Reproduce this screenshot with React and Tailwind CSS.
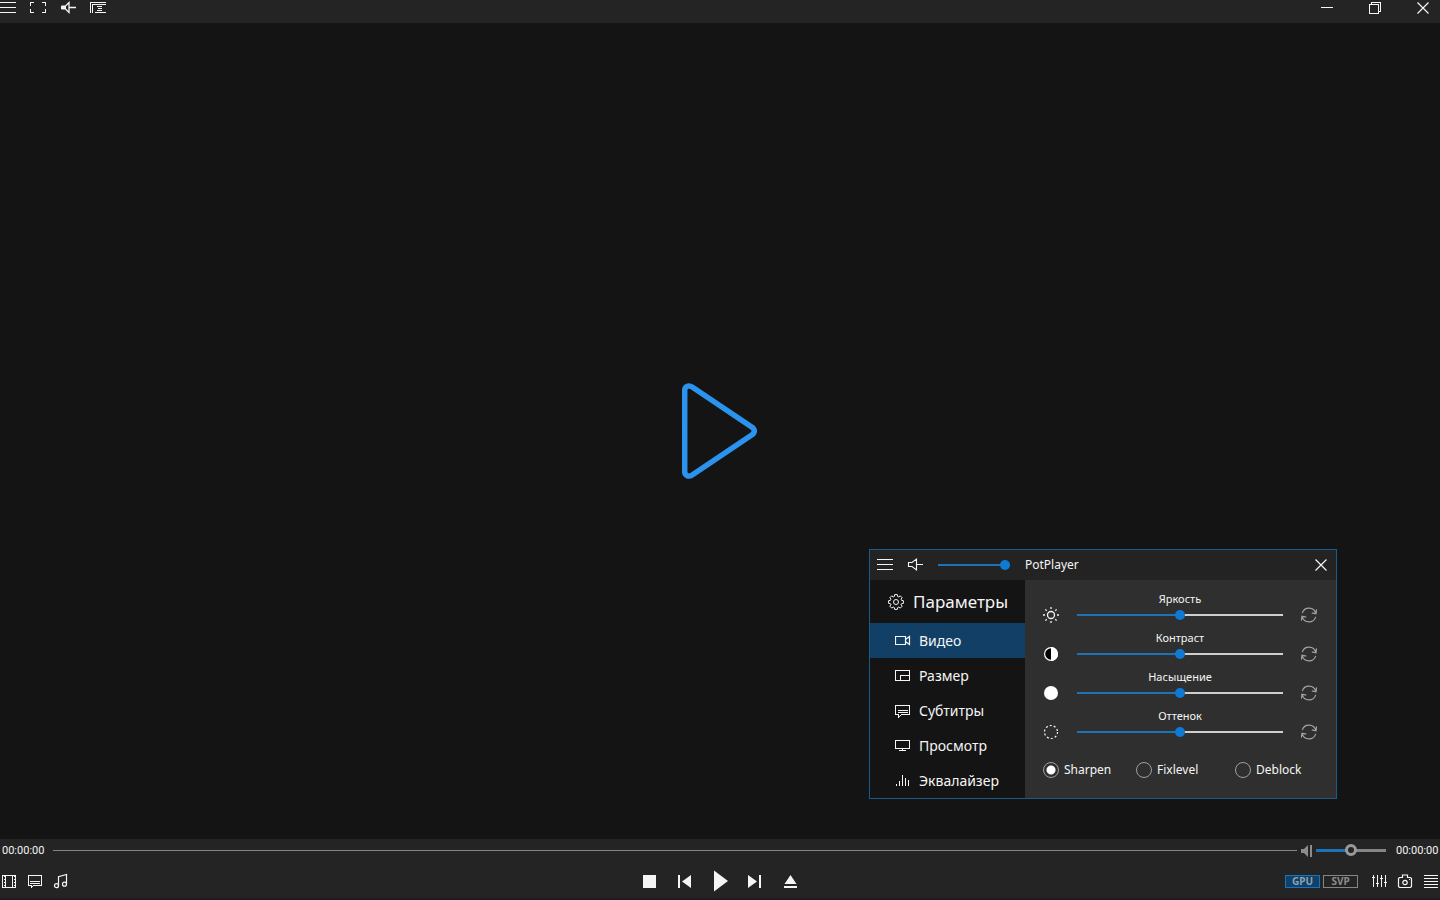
import React, { useState } from 'react';

const range =
  'appearance-none bg-transparent cursor-pointer block min-w-0 h-4 [&::-webkit-slider-runnable-track]:h-0.5 [&::-webkit-slider-runnable-track]:bg-[image:var(--track)] [&::-webkit-slider-thumb]:appearance-none [&::-webkit-slider-thumb]:size-2.5 [&::-webkit-slider-thumb]:-mt-1 [&::-webkit-slider-thumb]:rounded-full [&::-webkit-slider-thumb]:bg-[#0f7ad4]';

const volumeRange =
  'appearance-none bg-transparent cursor-pointer block h-4 w-[70px] [&::-webkit-slider-runnable-track]:h-[3px] [&::-webkit-slider-runnable-track]:bg-[image:var(--track)] [&::-webkit-slider-thumb]:appearance-none [&::-webkit-slider-thumb]:size-3 [&::-webkit-slider-thumb]:-mt-[5px] [&::-webkit-slider-thumb]:rounded-full [&::-webkit-slider-thumb]:border-[3px] [&::-webkit-slider-thumb]:border-[#9a9a9a] [&::-webkit-slider-thumb]:bg-[#242424]';

const trackStyle = (value, rest) => ({
  '--track': `linear-gradient(to right, #1c73b8 ${value}%, ${rest} ${value}%)`,
});

// All line icons share a 16px box
const Icon = ({ children, crisp = false }) => (
  <svg
    viewBox="0 0 16 16"
    className="block size-4 shrink-0"
    fill="none"
    stroke="currentColor"
    strokeWidth="1"
    shapeRendering={crisp ? 'crispEdges' : 'auto'}
    aria-hidden="true"
  >
    {children}
  </svg>
);

const MenuIcon = () => (
  <Icon crisp><path d="M0 2.5h16M0 7.5h16M0 12.5h16" /></Icon>
);

const FullscreenIcon = () => (
  <Icon crisp><path d="M4 2.5H.5V6M12 2.5h3.5V6M.5 9v3.5H4M15.5 9v3.5H12" /></Icon>
);

const MuteIcon = () => (
  <Icon>
    <path d="M1.5 5.5H5L9.5 2v11L5 9.5H1.5zM9.5 7.5H16" strokeWidth="1.1" />
  </Icon>
);

const MuteBoldIcon = () => (
  <Icon>
    <path d="M1.5 6h4v3h-4z" fill="currentColor" />
    <path d="M5.5 6L9 2.5v10L5.5 9M9 7.5h7" strokeWidth="1.3" />
  </Icon>
);

const PlaylistWindowIcon = () => (
  <Icon crisp>
    <path d="M.5 13V2.5H16M2.5 13V4.5H16M7 6.5h5M8 8.5h4M7 10.5h5M5 12.5h11" />
  </Icon>
);

const CloseIcon = () => (
  <Icon><path d="M2.5 2.5l11 11M13.5 2.5l-11 11" strokeWidth="1.2" /></Icon>
);

const GearIcon = () => (
  <Icon>
    <circle cx="8" cy="8" r="2.5" />
    <path d="M6.7.6h2.6l.4 1.9 1 .4 1.6-1 1.8 1.8-1 1.6.4 1 1.9.4v2.6l-1.9.4-.4 1 1 1.6-1.8 1.8-1.6-1-1 .4-.4 1.9H6.7l-.4-1.9-1-.4-1.6 1-1.8-1.8 1-1.6-.4-1L.6 9.3V6.7l1.9-.4.4-1-1-1.6 1.8-1.8 1.6 1 1-.4z" />
  </Icon>
);

const CameraIcon = () => (
  <Icon><path d="M.5 3.5h10v8H.5zM10.5 6.5L14.5 3.5v8l-4-3" strokeWidth="1.2" /></Icon>
);

const SizeIcon = () => (
  <Icon crisp><path d="M.5 2.5h14v10H.5zM5.5 12.5v-5h9" /></Icon>
);

const SubtitleIcon = () => (
  <Icon crisp>
    <path d="M.5 2.5h14v9H6.5L3.5 14.5V11.5H.5zM3 7.5h10M3 9.5h10" />
  </Icon>
);

const MonitorIcon = () => (
  <Icon crisp><path d="M.5 2.5h14v8H.5zM7.5 10.5v2M4 12.5h7" /></Icon>
);

const EqualizerIcon = () => (
  <Icon crisp><path d="M1.5 13v-2M4.5 13V8M7.5 13V2M10.5 13V5M13.5 13V7" /></Icon>
);

const BrightnessIcon = () => (
  <Icon>
    <circle cx="8" cy="8" r="3.5" strokeWidth="1.3" />
    <path d="M8 0v2M8 14v2M0 8h2M14 8h2M2.4 2.4l1.3 1.3M12.3 12.3l1.3 1.3M2.4 13.6l1.3-1.3M12.3 3.7l1.3-1.3" strokeWidth="1.3" />
  </Icon>
);

const ContrastIcon = () => (
  <Icon>
    <circle cx="8" cy="8" r="6.4" fill="#000" stroke="#fff" strokeWidth="1.2" />
    <path d="M8 1a7 7 0 0 1 0 14z" fill="#fff" stroke="none" />
  </Icon>
);

const SaturationIcon = () => (
  <Icon><circle cx="8" cy="8" r="7" fill="#fff" stroke="none" /></Icon>
);

const HueIcon = () => (
  <Icon><circle cx="8" cy="8" r="6.5" strokeWidth="1.2" strokeDasharray="2 2.08" /></Icon>
);

const ResetIcon = () => (
  <Icon>
    <path d="M1.3 6.2A7 7 0 0 1 14.8 6.4M14.7 9.8A7 7 0 0 1 1.2 9.6M15.6 2.4L15 6.8L10.8 5.8M.4 13.6L1 9.2L5.2 10.2" strokeWidth="1.2" />
  </Icon>
);

const FilmIcon = () => (
  <Icon crisp>
    <path d="M1.5 2.5h13v12h-13zM4.5 2.5v12M11.5 2.5v12" />
    <path d="M3 3v11M13 3v11" strokeDasharray="1 2" />
  </Icon>
);

const CommentIcon = () => (
  <Icon crisp>
    <path d="M1.5 2.5h13v10H6.5L4.5 14.5V12.5H1.5zM3 8.5h10M3 10.5h10" />
  </Icon>
);

const MusicIcon = () => (
  <Icon>
    <path d="M5.5 12.7V3.7l8-2.2v9.7" strokeWidth="1.2" />
    <circle cx="3.5" cy="12.7" r="2" strokeWidth="1.2" />
    <circle cx="11.5" cy="11.2" r="2" strokeWidth="1.2" />
  </Icon>
);

const MixerIcon = () => (
  <Icon crisp>
    <path d="M2.5 2v12M6.5 2v12M10.5 2v12M14.5 2v12M1 4.5h3M5 10.5h3M9 5.5h3M13 9.5h3" />
  </Icon>
);

const SnapshotIcon = () => (
  <Icon>
    <path d="M1.5 5.5l1-1h3v-2.5h5v2.5h3l1 1v8l-1 1h-11l-1-1z" strokeWidth="1.2" />
    <circle cx="8" cy="9.5" r="2.2" strokeWidth="1.2" />
    <path d="M12 6.5h1" />
  </Icon>
);

const ListIcon = () => (
  <Icon crisp><path d="M1 2.5h14M1 5.5h14M1 8.5h14M1 11.5h14M1 14.5h14" /></Icon>
);

const IconButton = ({ label, children, className = '' }) => (
  <button type="button" aria-label={label} className={`flex items-center justify-center ${className}`}>
    {children}
  </button>
);

const TopBar = () => (
  <header className="flex h-[23px] shrink-0 items-start justify-between bg-[#242424] pr-[9px]">
    <div className="flex gap-3.5">
      <IconButton label="Меню"><MenuIcon /></IconButton>
      <IconButton label="Во весь экран"><FullscreenIcon /></IconButton>
      <IconButton label="Звук"><MuteBoldIcon /></IconButton>
      <IconButton label="Плейлист"><PlaylistWindowIcon /></IconButton>
    </div>
    <div className="flex gap-8">
      <IconButton label="Свернуть">
        <Icon crisp><path d="M2 7.5h12" /></Icon>
      </IconButton>
      <IconButton label="Восстановить">
        <Icon crisp><path d="M2.5 4.5h9v9h-9zM4.5 4.5v-2h9v9h-2" /></Icon>
      </IconButton>
      <IconButton label="Закрыть"><CloseIcon /></IconButton>
    </div>
  </header>
);

const tabs = [
  { id: 'video', label: 'Видео', icon: CameraIcon },
  { id: 'size', label: 'Размер', icon: SizeIcon },
  { id: 'subtitles', label: 'Субтитры', icon: SubtitleIcon },
  { id: 'view', label: 'Просмотр', icon: MonitorIcon },
  { id: 'equalizer', label: 'Эквалайзер', icon: EqualizerIcon },
];

const sliders = [
  { id: 'brightness', label: 'Яркость', icon: BrightnessIcon },
  { id: 'contrast', label: 'Контраст', icon: ContrastIcon },
  { id: 'saturation', label: 'Насыщение', icon: SaturationIcon },
  { id: 'hue', label: 'Оттенок', icon: HueIcon },
];

const SliderRow = ({ id, label, icon: RowIcon }) => {
  const [value, setValue] = useState(50);

  return (
    <div className="flex items-end gap-[18px]">
      <RowIcon />
      <div className="flex min-w-0 flex-1 flex-col">
        <label htmlFor={id} className="text-center text-[11px] leading-4">{label}</label>
        <input
          id={id}
          type="range"
          value={value}
          onChange={(e) => setValue(Number(e.target.value))}
          className={`${range} w-full`}
          style={trackStyle(value, '#cfcfcf')}
        />
      </div>
      <button type="button" aria-label={`Сбросить: ${label}`} className="text-[#a3a3a3]" onClick={() => setValue(50)}>
        <ResetIcon />
      </button>
    </div>
  );
};

const SettingsPanel = () => {
  const [activeTab, setActiveTab] = useState('video');
  const [filter, setFilter] = useState('Sharpen');
  const [volume, setVolume] = useState(100);

  return (
    <section className="absolute right-[103px] bottom-10 w-[468px] border border-[#175a8e] bg-[#2f2f2f]">
      <div className="flex h-[30px] items-center bg-[#232323] px-[7px]">
        <IconButton label="Меню панели"><MenuIcon /></IconButton>
        <IconButton label="Звук панели" className="ml-3.5"><MuteIcon /></IconButton>
        <input
          type="range"
          aria-label="Громкость панели"
          value={volume}
          onChange={(e) => setVolume(Number(e.target.value))}
          className={`${range} ml-[15px] w-[72px]`}
          style={trackStyle(volume, '#cfcfcf')}
        />
        <h2 className="ml-[15px] flex-1 text-xs">PotPlayer</h2>
        <IconButton label="Закрыть панель"><CloseIcon /></IconButton>
      </div>
      <div className="flex">
        <nav className="w-[155px] shrink-0 bg-[#141414]">
          <h3 className="flex h-[43px] items-center gap-[9px] pl-[18px] text-[17px]">
            <GearIcon />
            Параметры
          </h3>
          {tabs.map(({ id, label, icon: TabIcon }) => (
            <button
              key={id}
              type="button"
              onClick={() => setActiveTab(id)}
              className={`flex h-[35px] w-full items-center gap-2 pl-[25px] text-sm ${activeTab === id ? 'bg-[#113f66]' : ''}`}
            >
              <TabIcon />
              {label}
            </button>
          ))}
        </nav>
        <div className="flex min-w-0 flex-1 flex-col pt-[11px] pr-[19px] pl-[18px]">
          <div className="flex flex-col gap-[7px]">
            {sliders.map((slider) => (
              <SliderRow key={slider.id} {...slider} />
            ))}
          </div>
          <div className="mt-[22px] grid grid-cols-[93px_99px_1fr]">
            {['Sharpen', 'Fixlevel', 'Deblock'].map((name) => (
              <label key={name} className="flex items-center gap-[5px] text-xs leading-4">
                <input
                  type="radio"
                  name="filter"
                  checked={filter === name}
                  onChange={() => setFilter(name)}
                  className="size-4 shrink-0 appearance-none rounded-full border border-[#a0a0a0] checked:bg-[radial-gradient(circle,#fff_4px,transparent_5px)]"
                />
                {name}
              </label>
            ))}
          </div>
        </div>
      </div>
    </section>
  );
};

const BottomBar = () => {
  const [position, setPosition] = useState(0);
  const [volume, setVolume] = useState(50);

  return (
    <footer className="shrink-0 border-b-2 border-[#211a20] bg-[#242424]">
      <div className="flex h-[23px] items-center px-0.5 text-[11px]">
        <span className="w-[42px] shrink-0 pt-0.5 font-['Roboto',sans-serif]">00:00:00</span>
        <input
          type="range"
          aria-label="Позиция"
          value={position}
          onChange={(e) => setPosition(Number(e.target.value))}
          className="ml-[9px] block h-[15px] min-w-0 flex-1 cursor-pointer appearance-none bg-transparent [&::-webkit-slider-runnable-track]:h-px [&::-webkit-slider-runnable-track]:bg-[#858585] [&::-webkit-slider-thumb]:size-px [&::-webkit-slider-thumb]:appearance-none"
        />
        <button type="button" aria-label="Громкость" className="ml-[3px] text-[#8c8c8c]">
          <Icon>
            <path d="M1 6h3l4-4v12l-4-4H1z" fill="currentColor" stroke="none" />
            <path d="M11 2v12" strokeWidth="2" />
          </Icon>
        </button>
        <input
          type="range"
          aria-label="Уровень громкости"
          value={volume}
          onChange={(e) => setVolume(Number(e.target.value))}
          className={volumeRange}
          style={trackStyle(volume, '#858585')}
        />
        <span className="ml-2.5 w-[42px] shrink-0 pt-0.5 font-['Roboto',sans-serif]">00:00:00</span>
      </div>
      <div className="grid h-9 grid-cols-[1fr_auto_1fr] items-center pt-0.5">
        <div className="flex gap-2.5 pl-px">
          <IconButton label="Видео"><FilmIcon /></IconButton>
          <IconButton label="Субтитры"><CommentIcon /></IconButton>
          <IconButton label="Аудио"><MusicIcon /></IconButton>
        </div>
        <div className="flex items-center gap-[19px] pr-px">
          <IconButton label="Стоп">
            <Icon><path d="M2 2h13v13H2z" fill="currentColor" stroke="none" /></Icon>
          </IconButton>
          <IconButton label="Назад">
            <Icon><path d="M2 2h2v13H2zM15 2v13L6 8.5z" fill="currentColor" stroke="none" /></Icon>
          </IconButton>
          <IconButton label="Играть">
            <svg viewBox="0 0 17 22" className="block h-[22px] w-[17px]" fill="currentColor" aria-hidden="true">
              <path d="M3 .5v21L17 11z" />
            </svg>
          </IconButton>
          <IconButton label="Вперёд">
            <Icon><path d="M12 2h2v13h-2zM1 2v13l9-6.5z" fill="currentColor" stroke="none" /></Icon>
          </IconButton>
          <IconButton label="Открыть">
            <Icon><path d="M8.5 2l6 9h-12zM2 13h13v2H2z" fill="currentColor" stroke="none" /></Icon>
          </IconButton>
        </div>
        <div className="flex items-center justify-end pr-px">
          <button type="button" className="h-[13px] w-[35px] border border-[#1c73b8] bg-[#10416a] text-[10px] leading-[11px] font-bold text-[#8fa0ae]">GPU</button>
          <button type="button" className="ml-[3px] h-[13px] w-[35px] border border-[#858585] text-[10px] leading-[11px] font-bold text-[#8c8c8c]">SVP</button>
          <IconButton label="Настройки" className="ml-[13px]"><MixerIcon /></IconButton>
          <IconButton label="Снимок" className="ml-2.5"><SnapshotIcon /></IconButton>
          <IconButton label="Список" className="ml-2.5"><ListIcon /></IconButton>
        </div>
      </div>
    </footer>
  );
};

const App = () => (
  <div className="flex h-screen flex-col overflow-hidden bg-[#141414] font-['Noto_Sans',sans-serif] text-[#f5f5f5]">
    <TopBar />
    <main className="relative flex min-h-0 flex-1 items-center justify-center">
      <button type="button" aria-label="Воспроизвести">
        <svg viewBox="0 0 76 96" className="block h-24 w-[76px]" fill="none" stroke="#2b93ee" strokeWidth="5.5" aria-hidden="true">
          <path d="M2.7 7.5v81c0 3.7 3.5 6 7.5 3.5L69.7 52c3.5-2.4 3.5-5.6 0-8L10.2 4C6.2 1.5 2.7 3.8 2.7 7.5z" />
        </svg>
      </button>
      <SettingsPanel />
    </main>
    <BottomBar />
  </div>
);

export default App;
